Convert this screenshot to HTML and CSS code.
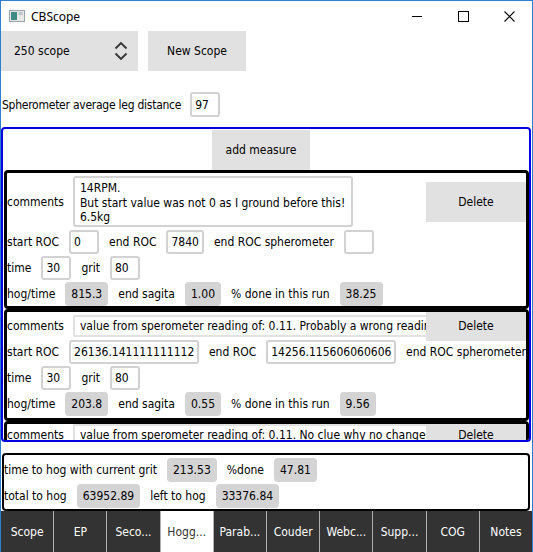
FILE: index.html
```html
<!DOCTYPE html>
<html>
<head>
<meta charset="utf-8">
<link rel="stylesheet" href="styles.css">
</head>
<body>
<div class="window">
  <div class="titlebar">
    <svg class="appicon" width="16" height="14" viewBox="0 0 16 14">
      <rect x="0.5" y="1.5" width="15" height="11" fill="#e8e8e8" stroke="#9aa4a8"/>
      <rect x="2" y="3" width="6" height="8" fill="#3f8a86"/>
      <rect x="9.5" y="3" width="4" height="3" fill="#b9c6ca"/>
    </svg>
    <span class="title">CBScope</span>
    <div class="controls">
      <span class="ctl"><svg width="10" height="10" viewBox="0 0 10 10"><line x1="0" y1="5.5" x2="10" y2="5.5" stroke="#000" stroke-width="1"/></svg></span>
      <span class="ctl"><svg width="11" height="11" viewBox="0 0 11 11"><rect x="0.5" y="0.5" width="10" height="10" fill="none" stroke="#000" stroke-width="1"/></svg></span>
      <span class="ctl"><svg width="11" height="11" viewBox="0 0 11 11"><path d="M0.5 0.5 L10.5 10.5 M10.5 0.5 L0.5 10.5" stroke="#000" stroke-width="1.1"/></svg></span>
    </div>
  </div>

  <div class="content">
    <div class="toprow">
      <div class="combo">
        <span>250 scope</span>
        <svg class="chev" width="14" height="20" viewBox="0 0 14 20"><path d="M1.5 7.5 L7 2 L12.5 7.5 M1.5 12.5 L7 18 L12.5 12.5" fill="none" stroke="#333" stroke-width="1.8"/></svg>
      </div>
      <div class="btn newscope">New Scope</div>
    </div>

    <div class="sphero">
      <span class="sphlabel">Spherometer average leg distance</span>
      <span class="in">97</span>
    </div>

    <div class="frame">
      <div class="addrow"><div class="btn add">add measure</div></div>

      <div class="card first">
        <div class="crow tall">
          <span>comments</span>
          <div class="textarea">14RPM.<br>But start value was not 0 as I ground before this!<br>6.5kg</div>
          <span class="spacer"></span>
          <div class="btn del big">Delete</div>
        </div>
        <div class="row"><span>start ROC</span><span class="in">0</span><span>end ROC</span><span class="in">7840</span><span>end ROC spherometer</span><span class="in"></span></div>
        <div class="row"><span>time</span><span class="in">30</span><span>grit</span><span class="in">80</span></div>
        <div class="row"><span>hog/time</span><span class="val">815.3</span><span>end sagita</span><span class="val">1.00</span><span>% done in this run</span><span class="val">38.25</span></div>
      </div>

      <div class="card">
        <div class="crow">
          <span>comments</span>
          <div class="line">value from sperometer reading of: 0.11. Probably a wrong reading</div>
          <div class="btn del">Delete</div>
        </div>
        <div class="row"><span>start ROC</span><span class="in">26136.141111111112</span><span>end ROC</span><span class="in">14256.115606060606</span><span class="nw">end ROC spherometer</span></div>
        <div class="row"><span>time</span><span class="in">30</span><span>grit</span><span class="in">80</span></div>
        <div class="row"><span>hog/time</span><span class="val">203.8</span><span>end sagita</span><span class="val">0.55</span><span>% done in this run</span><span class="val">9.56</span></div>
      </div>

      <div class="card last">
        <div class="crow">
          <span>comments</span>
          <div class="line">value from sperometer reading of: 0.11. No clue why no change</div>
          <div class="btn del">Delete</div>
        </div>
      </div>
    </div>

    <div class="summary">
      <div class="srow"><span>time to hog with current grit</span><span class="val">213.53</span><span>%done</span><span class="val">47.81</span></div>
      <div class="srow"><span>total to hog</span><span class="val">63952.89</span><span>left to hog</span><span class="val">33376.84</span></div>
    </div>

    <div class="tabs">
      <span class="tab">Scope</span>
      <span class="tab">EP</span>
      <span class="tab">Seco...</span>
      <span class="tab sel">Hogg...</span>
      <span class="tab">Parab...</span>
      <span class="tab">Couder</span>
      <span class="tab">Webc...</span>
      <span class="tab">Supp...</span>
      <span class="tab">COG</span>
      <span class="tab">Notes</span>
    </div>
  </div>
</div>
</body>
</html>
```

FILE: styles.css
```css
html, body {
  margin: 0;
  padding: 0;
  background: #fff;
}
.window {
  width: 533px;
  height: 552px;
  box-sizing: border-box;
  border-left: 1px solid #2b7fd3;
  border-right: 1px solid #2b7fd3;
  overflow: hidden;
  font-family: "DejaVu Sans Condensed", "DejaVu Sans", sans-serif;
  font-size: 12px;
  color: #000;
  display: flex;
  flex-direction: column;
}
.titlebar {
  height: 31px;
  box-sizing: border-box;
  border-top: 1px solid #2b7fd3;
  display: flex;
  align-items: center;
  background: #fff;
}
.appicon {
  margin-left: 8px;
  margin-right: 6px;
}
.title {
  font-family: "Noto Sans", "Open Sans", sans-serif;
  font-size: 12px;
  color: #000;
}
.controls {
  margin-left: auto;
  display: flex;
  height: 100%;
}
.ctl {
  width: 46px;
  display: flex;
  align-items: center;
  justify-content: center;
}
.content {
  flex: 1;
  display: flex;
  flex-direction: column;
}
.toprow {
  display: flex;
  gap: 10px;
  height: 40px;
}
.combo {
  width: 137px;
  background: #e1e1e1;
  display: flex;
  align-items: center;
  justify-content: space-between;
  padding: 0 10px 0 13px;
  box-sizing: border-box;
}
.btn {
  background: #e1e1e1;
  display: flex;
  align-items: center;
  justify-content: center;
  box-sizing: border-box;
}
.newscope {
  width: 98px;
}
.sphero {
  margin-top: 21px;
  height: 25px;
  display: flex;
  align-items: center;
  gap: 9px;
  padding-left: 1px;
}
.sphlabel {
  letter-spacing: -0.25px;
}
.in {
  box-sizing: border-box;
  height: 24px;
  min-width: 30px;
  border: 2px solid #d2d2d2;
  border-radius: 3px;
  padding: 0 3px;
  display: flex;
  align-items: center;
  white-space: nowrap;
}
.sphero .in {
  height: 25px;
}
.val {
  box-sizing: border-box;
  height: 24px;
  min-width: 30px;
  background: #d4d4d4;
  border-radius: 4px;
  padding: 0 6px;
  display: flex;
  align-items: center;
  white-space: nowrap;
}
.frame {
  margin-top: 10px;
  width: 530px;
  height: 315px;
  box-sizing: border-box;
  border: 2px solid #0000e0;
  border-radius: 4px;
  padding-top: 1px;
  overflow: hidden;
  display: flex;
  flex-direction: column;
}
.addrow {
  display: flex;
  justify-content: center;
  padding-right: 10px;
  flex: none;
}
.add {
  width: 98px;
  height: 40px;
}
.card {
  flex: none;
  margin-left: 1px;
  width: 525px;
  box-sizing: border-box;
  border: 3px solid #000;
  border-radius: 4px;
  display: flex;
  flex-direction: column;
  gap: 2px;
  padding-bottom: 2px;
  overflow: hidden;
}
.card.first {
  padding-bottom: 0;
}
.crow {
  display: flex;
  align-items: center;
  gap: 9px;
  height: 28px;
  margin-bottom: -2px;
}
.card.last .crow {
  height: 21px;
}
.crow.tall {
  height: 51px;
  margin-top: 3px;
  margin-bottom: 1px;
}
.textarea {
  box-sizing: border-box;
  width: 280px;
  height: 51px;
  border: 2px solid #d2d2d2;
  border-radius: 3px;
  padding: 3px 5px;
  line-height: 14.5px;
  white-space: nowrap;
  overflow: hidden;
}
.spacer {
  flex: 1;
}
.line {
  flex: 1;
  min-width: 0;
  box-sizing: border-box;
  height: 22px;
  border: 2px solid #e2e2e2;
  border-right: none;
  border-radius: 2px 0 0 2px;
  padding: 0 5px;
  display: flex;
  align-items: center;
  white-space: nowrap;
  overflow: hidden;
  margin-right: -9px;
}
.del {
  flex: none;
  width: 100px;
  height: 30px;
}
.del.big {
  height: 40px;
}
.row {
  display: flex;
  align-items: center;
  gap: 10px;
  height: 24px;
  white-space: nowrap;
}
.nw {
  white-space: nowrap;
}
.summary {
  margin-top: 11px;
  margin-left: 1px;
  width: 528px;
  height: 58px;
  box-sizing: border-box;
  border: 2px solid #000;
  border-radius: 4px;
  padding-top: 2px;
  display: flex;
  flex-direction: column;
  gap: 1px;
}
.srow {
  display: flex;
  align-items: center;
  gap: 10px;
  height: 25px;
}
.tabs {
  flex: 1;
  display: flex;
  background: #333;
}
.tab {
  flex: 1;
  display: flex;
  align-items: center;
  justify-content: center;
  color: #fff;
  border-left: 1px solid #b0b0b0;
  white-space: nowrap;
}
.tab:first-child {
  border-left: none;
}
.tab.sel {
  background: #fff;
  color: #333;
}
```
